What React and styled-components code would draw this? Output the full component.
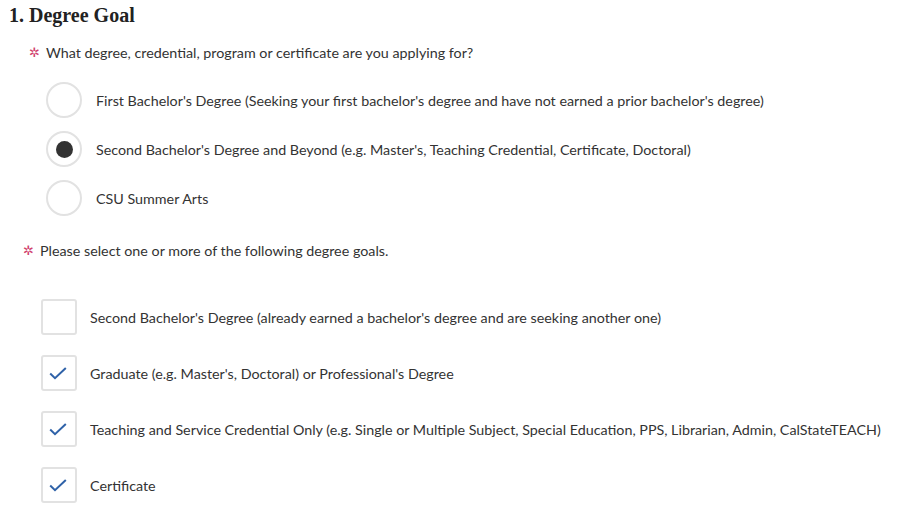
import styled, { createGlobalStyle } from "styled-components";

const GlobalStyle = createGlobalStyle`
	body {
		margin: 0;
		background: #ffffff;
		font-family: "Lato", "Noto Sans", sans-serif;
		color: #333333;
	}
`;

const Page = styled.div`
	padding: 4px 9px;
`;

const Title = styled.h2`
	margin: 0 0 17px;
	font-family: "Liberation Serif", serif;
	font-weight: bold;
	font-size: 20px;
	color: #222222;
`;

const Question = styled.div`
	display: flex;
	align-items: center;
	gap: 8px;
	margin: ${(p) => p.top}px 0 0 ${(p) => p.indent}px;
	font-size: 14.3px;
	color: #333333;
`;

const Star = styled.span`
	color: #d0406e;
	font-family: "DejaVu Sans", sans-serif;
	font-size: 13px;
	width: 9px;
	text-align: center;
`;

const Options = styled.div`
	display: flex;
	flex-direction: column;
	gap: ${(p) => p.gap}px;
	margin: ${(p) => p.top}px 0 0 ${(p) => p.indent}px;
`;

const Option = styled.label`
	display: flex;
	align-items: center;
	gap: ${(p) => p.gap}px;
	font-size: 14.3px;
	color: #333333;
`;

const Radio = styled.span`
	box-sizing: border-box;
	width: 36px;
	height: 36px;
	border-radius: 50%;
	border: 2px solid #e2e2e2;
	display: flex;
	align-items: center;
	justify-content: center;
	flex-shrink: 0;

	&::after {
		content: "";
		width: 17px;
		height: 17px;
		border-radius: 50%;
		background: #333333;
		display: ${(p) => (p.checked ? "block" : "none")};
	}
`;

const Box = styled.span`
	box-sizing: border-box;
	width: 36px;
	height: 36px;
	border-radius: 3px;
	border: 2px solid #e2e2e2;
	display: flex;
	align-items: center;
	justify-content: center;
	flex-shrink: 0;
`;

const Check = () => (
	<svg width="18" height="13" viewBox="0 0 18 13" style={{ marginLeft: -3, marginTop: 1 }}>
		<path d="M1.2 6.5 L6 11.2 L16.8 1" fill="none" stroke="#2f62a8" strokeWidth="2" />
	</svg>
);

const radios = [
	{ label: "First Bachelor's Degree (Seeking your first bachelor's degree and have not earned a prior bachelor's degree)" },
	{ label: "Second Bachelor's Degree and Beyond (e.g. Master's, Teaching Credential, Certificate, Doctoral)", checked: true },
	{ label: "CSU Summer Arts" },
];

const boxes = [
	{ label: "Second Bachelor's Degree (already earned a bachelor's degree and are seeking another one)" },
	{ label: "Graduate (e.g. Master's, Doctoral) or Professional's Degree", checked: true },
	{ label: "Teaching and Service Credential Only (e.g. Single or Multiple Subject, Special Education, PPS, Librarian, Admin, CalStateTEACH)", checked: true },
	{ label: "Certificate", checked: true },
];

const App = () => {
	return (
		<Page>
			<GlobalStyle />
			<Title>1. Degree Goal</Title>
			<Question indent={20} top={0}>
				<Star>✲</Star>
				What degree, credential, program or certificate are you applying for?
			</Question>
			<Options indent={37} top={21} gap={13}>
				{radios.map((r) => (
					<Option key={r.label} gap={14}>
						<Radio checked={r.checked} />
						{r.label}
					</Option>
				))}
			</Options>
			<Question indent={14} top={26}>
				<Star>✲</Star>
				Please select one or more of the following degree goals.
			</Question>
			<Options indent={32} top={40} gap={20}>
				{boxes.map((b) => (
					<Option key={b.label} gap={13}>
						<Box>{b.checked && <Check />}</Box>
						{b.label}
					</Option>
				))}
			</Options>
		</Page>
	);
};

export default App;
